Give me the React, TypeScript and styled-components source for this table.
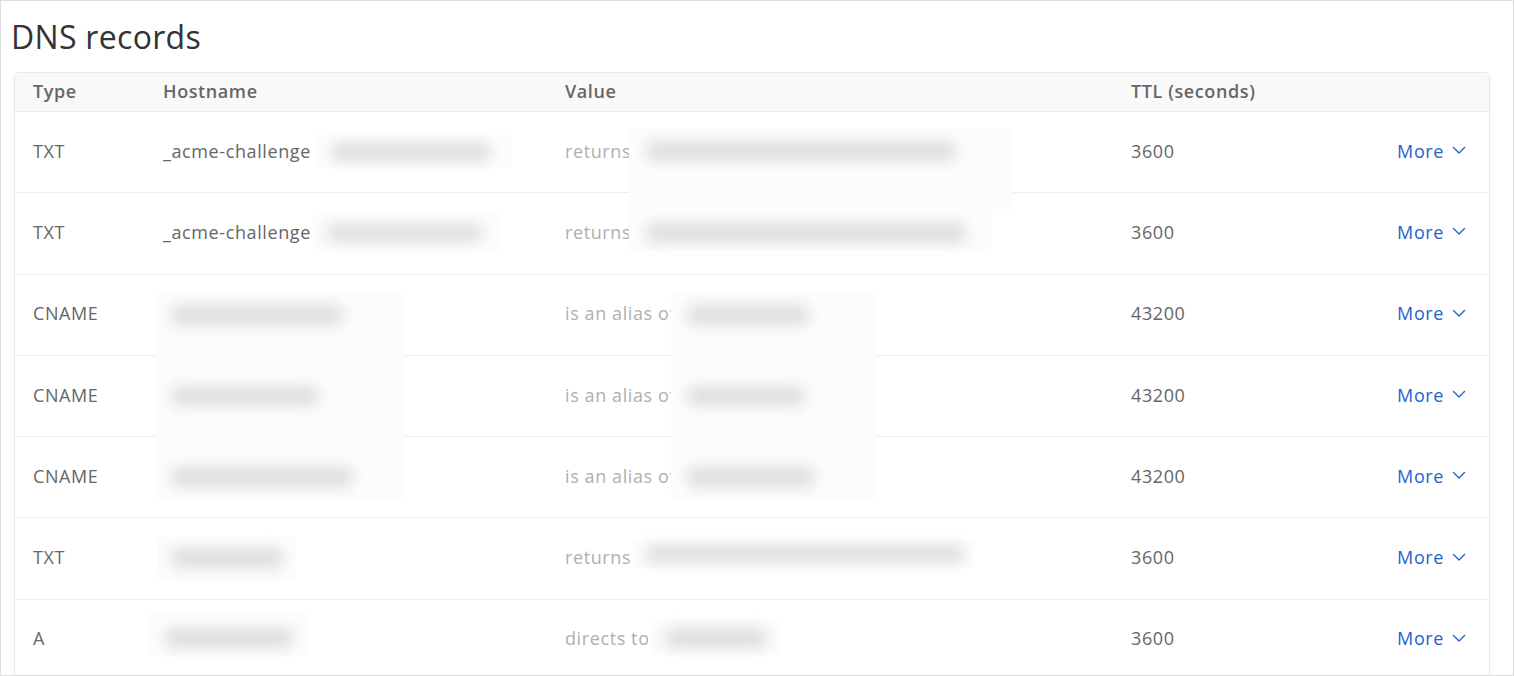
import React from "react";
import styled, { createGlobalStyle } from "styled-components";

const Global = createGlobalStyle`
  html, body { margin: 0; padding: 0; background: #fff; }
  body { font-family: "Open Sans", Lato, Arial, sans-serif; }
`;

const Frame = styled.div`
  box-sizing: border-box;
  width: 1514px;
  height: 676px;
  border: 1px solid #dcdcdc;
  padding: 0 23px 0 12px;
  overflow: hidden;
`;

const Title = styled.h1`
  margin: 0 0 0 -2px;
  padding: 16px 0 0 0;
  height: 71px;
  box-sizing: border-box;
  font-size: 32px;
  font-weight: 400;
  letter-spacing: 0.3px;
  color: #333;
  line-height: 40px;
`;

const Card = styled.div`
  margin-left: 1px;
  border: 1px solid #e8e8e8;
  border-radius: 5px;
`;

const Grid = `
  display: grid;
  grid-template-columns: 130px 402px 566px 1fr 140px;
  padding: 0 23px 0 18px;
  letter-spacing: 0.6px;
`;

const HeaderRow = styled.div`
  ${Grid}
  height: 39px;
  box-sizing: border-box;
  padding-bottom: 2px;
  align-items: center;
  background: #f9f9f9;
  border-bottom: 1px solid #ebebeb;
  border-radius: 5px 5px 0 0;
  font-size: 18px;
  font-weight: 600;
  color: #666;
`;

const Row = styled.div`
  ${Grid}
  position: relative;
  box-sizing: border-box;
  height: 81.3px;
  padding-bottom: 3px;
  border-bottom: 1px solid #ededed;
  font-size: 18px;
  color: #666;
`;

const Cell = styled.div<{ $end?: boolean }>`
  display: flex;
  align-items: center;
  justify-content: ${(p) => (p.$end ? "flex-end" : "flex-start")};
  white-space: nowrap;
`;

const Prefix = styled.span`
  color: #b0b0b0;
`;

const MoreLink = styled.a`
  display: inline-flex;
  align-items: center;
  gap: 8px;
  color: #2363cf;
  text-decoration: none;
  cursor: pointer;
`;

const Patch = styled.span`
  position: absolute;
  z-index: 1;
  background: #fcfcfc;
`;

const Bar = styled.span`
  position: absolute;
  z-index: 2;
  border-radius: 8px;
  background: #dedede;
  filter: blur(7px);
`;

type Box = { x: number; y: number; w: number; h: number };
type Rec = {
  type: string;
  host: string;
  prefix: string;
  ttl: string;
  patches: Box[];
  bars: Box[];
};

const X0 = 14; // card inner left in page coords

const records: Rec[] = [
  {
    type: "TXT",
    host: "_acme-challenge",
    prefix: "returns",
    ttl: "3600",
    patches: [
      { x: 314, y: 23, w: 196, h: 33 },
      { x: 628, y: 16, w: 384, h: 81 },
    ],
    bars: [
      { x: 330, y: 31, w: 160, h: 18 },
      { x: 645, y: 29, w: 310, h: 20 },
    ],
  },
  {
    type: "TXT",
    host: "_acme-challenge",
    prefix: "returns",
    ttl: "3600",
    patches: [
      { x: 312, y: 21, w: 188, h: 36 },
      { x: 628, y: -1, w: 362, h: 58 },
    ],
    bars: [
      { x: 326, y: 31, w: 155, h: 18 },
      { x: 645, y: 30, w: 320, h: 20 },
    ],
  },
  {
    type: "CNAME",
    host: "",
    prefix: "is an alias of",
    ttl: "43200",
    patches: [
      { x: 154, y: 18, w: 249, h: 207 },
      { x: 670, y: 18, w: 206, h: 207 },
    ],
    bars: [
      { x: 170, y: 30, w: 172, h: 20 },
      { x: 686, y: 30, w: 122, h: 20 },
    ],
  },
  {
    type: "CNAME",
    host: "",
    prefix: "is an alias of",
    ttl: "43200",
    patches: [],
    bars: [
      { x: 170, y: 30, w: 148, h: 20 },
      { x: 686, y: 30, w: 118, h: 20 },
    ],
  },
  {
    type: "CNAME",
    host: "",
    prefix: "is an alias of",
    ttl: "43200",
    patches: [],
    bars: [
      { x: 170, y: 30, w: 182, h: 20 },
      { x: 686, y: 30, w: 128, h: 20 },
    ],
  },
  {
    type: "TXT",
    host: "",
    prefix: "returns",
    ttl: "3600",
    patches: [
      { x: 157, y: 18, w: 138, h: 45 },
      { x: 633, y: 22, w: 340, h: 28 },
    ],
    bars: [
      { x: 170, y: 30, w: 112, h: 20 },
      { x: 645, y: 27, w: 318, h: 18 },
    ],
  },
  {
    type: "A",
    host: "",
    prefix: "directs to",
    ttl: "3600",
    patches: [
      { x: 148, y: 14, w: 158, h: 42 },
      { x: 650, y: 20, w: 128, h: 35 },
    ],
    bars: [
      { x: 164, y: 28, w: 128, h: 20 },
      { x: 664, y: 28, w: 102, h: 20 },
    ],
  },
];

const Chevron = () => (
  <svg width="14" height="9" viewBox="0 0 14 9" fill="none">
    <polyline
      points="1.5,1.5 7,7 12.5,1.5"
      stroke="#2363cf"
      strokeWidth="1.4"
      strokeLinecap="round"
      strokeLinejoin="round"
    />
  </svg>
);

export default function App() {
  return (
    <>
      <Global />
      <Frame>
        <Title>DNS records</Title>
        <Card>
          <HeaderRow>
            <Cell>Type</Cell>
            <Cell>Hostname</Cell>
            <Cell>Value</Cell>
            <Cell>TTL (seconds)</Cell>
            <Cell />
          </HeaderRow>
          {records.map((r, i) => (
            <Row key={i}>
              <Cell>{r.type}</Cell>
              <Cell>{r.host}</Cell>
              <Cell>
                <Prefix>{r.prefix}</Prefix>
              </Cell>
              <Cell>{r.ttl}</Cell>
              <Cell $end>
                <MoreLink>
                  More <Chevron />
                </MoreLink>
              </Cell>
              {r.patches.map((p, j) => (
                <Patch
                  key={"p" + j}
                  style={{ left: p.x - X0, top: p.y, width: p.w, height: p.h }}
                />
              ))}
              {r.bars.map((b, j) => (
                <Bar
                  key={"b" + j}
                  style={{ left: b.x - X0, top: b.y, width: b.w, height: b.h }}
                />
              ))}
            </Row>
          ))}
        </Card>
      </Frame>
    </>
  );
}
